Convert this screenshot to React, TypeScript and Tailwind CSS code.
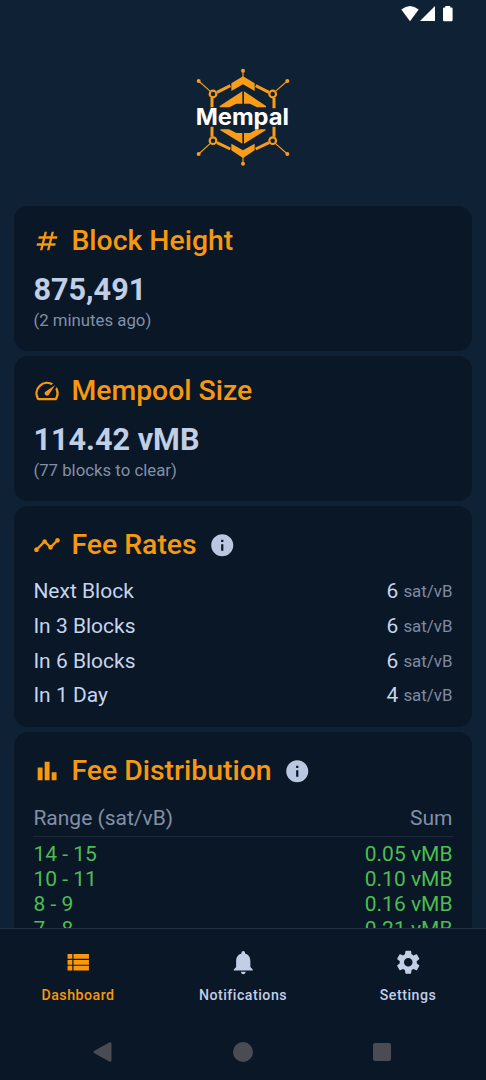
import type { ReactNode } from "react";
import { MdInfo, MdNotifications, MdNumbers, MdSettings, MdSpeed, MdTimeline, MdViewList } from "react-icons/md";

const feeRates = [
  { label: "Next Block", value: "6" },
  { label: "In 3 Blocks", value: "6" },
  { label: "In 6 Blocks", value: "6" },
  { label: "In 1 Day", value: "4" },
];

const distribution = [
  { range: "14 - 15", sum: "0.05 vMB" },
  { range: "10 - 11", sum: "0.10 vMB" },
  { range: "8 - 9", sum: "0.16 vMB" },
  { range: "7 - 8", sum: "0.21 vMB" },
];

function BarsIcon() {
  return (
    <svg viewBox="0 0 24 24" className="size-7" fill="currentColor">
      <path d="M4 9h4.2v11H4zM16 13h4.2v7h-4.2zM10 4h4.2v16h-4.2z" />
    </svg>
  );
}

function StatusBar() {
  return (
    <div className="flex h-7 justify-end pt-1.5 pr-[32px]">
      <svg viewBox="0 0 54 18" className="h-[18px] w-[54px]" fill="#fff">
        <path d="M1.3 3.6Q10 -3.4 18.7 3.6L10 15.2Z" />
        <path d="M35 0V15H20Z" />
        <path d="M45.3 0h5v1.5h1.1q1.2 0 1.2 1.2v11.3q0 1.2-1.2 1.2h-7.2q-1.2 0-1.2-1.2V2.7q0-1.2 1.2-1.2h1.1z" />
      </svg>
    </div>
  );
}

function Logo() {
  return (
    <svg viewBox="0 0 360 345" className="h-[115px] w-[120px]">
      <g fill="none" stroke="#f99d16" strokeWidth="9">
        <path d="M87 145V114M102 97L142 77M273 145V114M258 97L218 77" />
        <path d="M87 200V230M102 248L142 267M273 200V230M258 248L218 267" />
        <circle cx="90" cy="102" r="10" strokeWidth="6.5" />
        <circle cx="269" cy="102" r="10" strokeWidth="6.5" />
        <circle cx="90" cy="242" r="10" strokeWidth="6.5" />
        <circle cx="269" cy="242" r="10" strokeWidth="6.5" />
        <path strokeWidth="3.5" d="M82 94L47 63M277 94L313 63M82 250L47 282M277 250L313 282M180 55V33M180 290V310" />
      </g>
      <g fill="#f99d16">
        <circle cx="47" cy="63" r="6" />
        <circle cx="313" cy="63" r="6" />
        <circle cx="47" cy="282" r="6" />
        <circle cx="313" cy="282" r="6" />
        <circle cx="180" cy="32" r="6" />
        <circle cx="180" cy="311" r="6" />
        <path d="M145 70L180 49L215 70V93L180 73L145 93Z" />
        <path d="M145 271L180 294L215 271V251L180 271L145 251Z" />
        <path d="M178 94V131H160L139 142H110V138ZM183 94V131H201L222 142H249V138Z" />
        <path d="M178 251V219H160L138 208H112V211ZM183 251V219H201L222 208H248V211Z" />
      </g>
      <text
        x="178"
        y="196"
        textAnchor="middle"
        textLength="280"
        lengthAdjust="spacingAndGlyphs"
        fill="#fff"
        fontSize="68"
        fontWeight="700"
        fontFamily="Inter, 'Open Sans', sans-serif"
        stroke="#0f2135"
        strokeWidth="4"
        paintOrder="stroke"
      >
        Mempal
      </text>
    </svg>
  );
}

function CardTitle({ icon, children, info = false }: { icon: ReactNode; children: string; info?: boolean }) {
  return (
    <div className="flex items-center text-[#f7980f]">
      <span className="flex w-[38px] text-[28px]">{icon}</span>
      <h2 className="text-[28.4px] leading-[38px] font-medium whitespace-nowrap">{children}</h2>
      {info && <MdInfo className="ml-[12.6px] size-[26.5px] text-[#b9c7e0]" />}
    </div>
  );
}

function StatCard({ icon, title, value, note }: { icon: ReactNode; title: string; value: string; note: string }) {
  return (
    <section className="h-[145px] shrink-0 rounded-[14px] bg-[#0a1727] px-[19px] pt-4">
      <CardTitle icon={icon}>{title}</CardTitle>
      <p className="mt-3 text-[30.6px] leading-9 font-bold text-[#c0cee6]">{value}</p>
      <p className="text-[16.8px] leading-6 text-[#8290a5]">{note}</p>
    </section>
  );
}

function NavItem({ icon, label, active = false }: { icon: ReactNode; label: string; active?: boolean }) {
  return (
    <button className={`flex w-[165px] shrink-0 flex-col items-center ${active ? "text-[#f7980f]" : "text-[#c0cee6]"}`}>
      <span className="text-[28.5px]">{icon}</span>
      <span className="mt-[8px] text-[14.2px] leading-5 font-medium tracking-[0.5px]">{label}</span>
    </button>
  );
}

export default function App() {
  return (
    <div className="flex h-[1080px] w-[486px] flex-col overflow-hidden bg-[#0f2135] font-[Roboto,sans-serif]">
      <StatusBar />
      <header className="flex h-[178px] shrink-0 justify-center pt-8">
        <Logo />
      </header>
      <main className="flex min-h-0 flex-1 flex-col gap-[5px] overflow-hidden pr-[14.5px] pl-[14.4px]">
        <StatCard icon={<MdNumbers />} title="Block Height" value="875,491" note="(2 minutes ago)" />
        <StatCard icon={<MdSpeed />} title="Mempool Size" value="114.42 vMB" note="(77 blocks to clear)" />
        <section className="h-[221px] shrink-0 rounded-[14px] bg-[#0a1727] px-[19px] pt-5">
          <CardTitle icon={<MdTimeline />} info>
            Fee Rates
          </CardTitle>
          <ul className="mt-[10.6px]">
            {feeRates.map((row) => (
              <li key={row.label} className="flex h-[34.7px] items-center justify-between text-[21px] text-[#c6d4ec]">
                <span>{row.label}</span>
                <span className="flex items-center gap-[5px]">
                  {row.value}
                  <span className="text-[16.9px] text-[#7d8aa0]">sat/vB</span>
                </span>
              </li>
            ))}
          </ul>
        </section>
        <section className="h-[300px] shrink-0 rounded-[14px] bg-[#0a1727] px-[19px] pt-5">
          <CardTitle icon={<BarsIcon />} info>
            Fee Distribution
          </CardTitle>
          <div className="mt-[11px] flex h-9 items-center justify-between border-b border-[#1b293b] text-[21px] text-[#8290a5]">
            <span>Range (sat/vB)</span>
            <span>Sum</span>
          </div>
          <ul className="mt-[5px]">
            {distribution.map((row) => (
              <li key={row.range} className="flex h-[25.2px] items-center justify-between text-[21px] text-[#4dbd51]">
                <span>{row.range}</span>
                <span>{row.sum}</span>
              </li>
            ))}
          </ul>
        </section>
      </main>
      <footer className="h-[152px] shrink-0 border-t border-[#213144] bg-[#0a1727]">
        <nav className="flex justify-center pt-[19px]">
          <NavItem icon={<MdViewList />} label="Dashboard" active />
          <NavItem icon={<MdNotifications />} label="Notifications" />
          <NavItem icon={<MdSettings />} label="Settings" />
        </nav>
        <div className="mt-[37px] flex h-5 items-center justify-between pr-[95px] pl-[93px]">
          <svg viewBox="0 0 19 20" className="h-5 w-[19px]" fill="#4b4b54">
            <path d="M1 9L16.3.5Q18.5-.3 18.5 2V18Q18.5 20.3 16.3 19.5L1 11Q0 10 1 9Z" />
          </svg>
          <span className="size-5 rounded-full bg-[#4b4b54]" />
          <span className="size-[18px] rounded-[2px] bg-[#4b4b54]" />
        </div>
      </footer>
    </div>
  );
}
